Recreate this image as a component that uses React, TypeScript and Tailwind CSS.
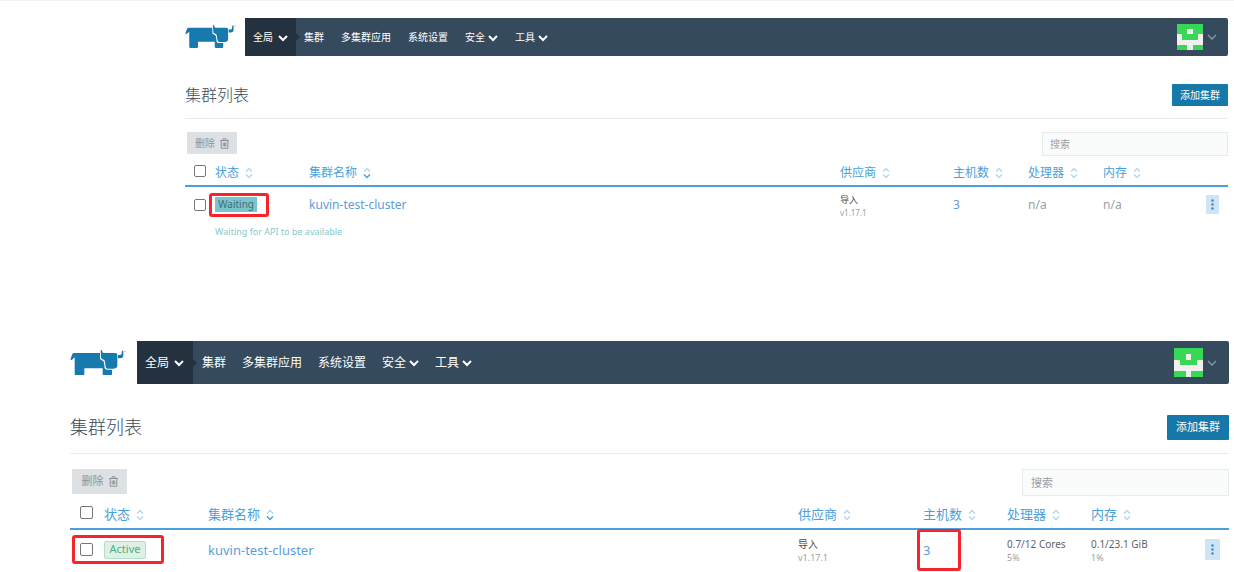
import { Fragment } from 'react';

type Size = 'compact' | 'regular';

type Cluster = {
  name: string;
  state: 'waiting' | 'active';
  message?: string;
  provider: string;
  version: string;
  hosts: number;
  cpu: string;
  cpuUsage?: string;
  memory: string;
  memoryUsage?: string;
};

const NAV = [
  { label: '集群' },
  { label: '多集群应用' },
  { label: '系统设置' },
  { label: '安全', menu: true },
  { label: '工具', menu: true },
];

const COLUMNS = ['状态', '集群名称', '供应商', '主机数', '处理器', '内存'];

const WAITING: Cluster = {
  name: 'kuvin-test-cluster',
  state: 'waiting',
  message: 'Waiting for API to be available',
  provider: '导入',
  version: 'v1.17.1',
  hosts: 3,
  cpu: 'n/a',
  memory: 'n/a',
};

const ACTIVE: Cluster = {
  name: 'kuvin-test-cluster',
  state: 'active',
  provider: '导入',
  version: 'v1.17.1',
  hosts: 3,
  cpu: '0.7/12 Cores',
  cpuUsage: '5%',
  memory: '0.1/23.1 GiB',
  memoryUsage: '1%',
};

// Every size-dependent class lives here, so the markup below stays the same for both.
const SIZES = {
  compact: {
    bar: 'h-[38px]',
    logo: 'w-[51px] mr-[9px]',
    nav: 'text-[10px]',
    scope: 'w-[51px] pl-2 gap-[5px]',
    links: 'ml-2 gap-[17px]',
    avatar: 'size-[26px]',
    user: 'pr-[11px] gap-1',
    head: 'mt-[28px] pb-3',
    title: 'text-[16px] leading-[22px]',
    add: 'h-[22px] w-[56px] text-[10px]',
    tools: 'mt-[13px]',
    remove: 'ml-[2px] h-[22px] w-[50px] text-[10px]',
    search: 'h-[24px] w-[186px] pl-[7px] text-[10px]',
    th: 'h-[30px] pt-1 text-[12px]',
    row: 'h-[36px]',
    badge: 'h-[15px] w-[42px] text-[10px]',
    check: 'size-3 ml-[9px]',
    text: 'block text-[12px] leading-4',
    small: 'pt-[2px] text-[9px] leading-[13px]',
    tiny: 'text-[8px] leading-[13px]',
    more: 'w-[13px] h-[19px] mr-[9px]',
    cols: ['w-[30px]', 'w-[94px]', 'w-auto', 'w-[113px]', 'w-[75px]', 'w-[75px]', 'w-[75px]', 'w-[50px]'],
  },
  regular: {
    bar: 'h-[43px]',
    logo: 'w-[56px] mr-[11px]',
    nav: 'text-[12px]',
    scope: 'w-[56px] pl-2 gap-[5px]',
    links: 'ml-[9px] gap-4',
    avatar: 'size-[29px]',
    user: 'pr-3 gap-1',
    head: 'mt-[31px] pb-[13px]',
    title: 'text-[18px] leading-[25px]',
    add: 'h-[25px] w-[62px] text-[11px]',
    tools: 'mt-[15px]',
    remove: 'ml-[2px] h-[25px] w-[55px] text-[11px]',
    search: 'h-[27px] w-[207px] pl-2 text-[11px]',
    th: 'h-[33px] pt-[5px] text-[13px]',
    row: 'h-[40px]',
    badge: 'h-[18px] w-[42px] text-[11px]',
    check: 'size-[13px] ml-[10px]',
    text: 'block text-[13px] leading-5',
    small: 'pt-[2px] text-[10px] leading-[14px]',
    tiny: 'text-[9px] leading-[14px]',
    more: 'w-[15px] h-[21px] mr-[9px]',
    cols: ['w-[34px]', 'w-[104px]', 'w-auto', 'w-[125px]', 'w-[84px]', 'w-[84px]', 'w-[84px]', 'w-[54px]'],
  },
};

export default function App() {
  return (
    <main className="border-t border-[#f3f3f3] bg-white pb-[2px] font-['Noto_Sans','Noto_Sans_CJK_SC',sans-serif] text-[#6c757d]">
      <div className="pt-[17px] pr-[6px] pl-[15%]">
        <ClusterPage size="compact" cluster={WAITING} />
      </div>
      <div className="mt-[101px] pr-[5px] pl-[70px]">
        <ClusterPage size="regular" cluster={ACTIVE} />
      </div>
    </main>
  );
}

function ClusterPage({ size, cluster }: { size: Size; cluster: Cluster }) {
  const s = SIZES[size];

  return (
    <section>
      {/* Top bar */}
      <header className="flex items-center">
        <a href="#home" aria-label="Rancher" className={`shrink-0 ${s.logo}`}>
          <Logo />
        </a>
        <nav className={`flex flex-1 items-center rounded-xs bg-[#364a5e] text-white ${s.bar} ${s.nav}`}>
          <button className={`relative flex h-full items-center bg-[#24313e] ${s.scope}`}>
            全局
            <Chevron />
            <span className="absolute top-1/2 left-full -mt-1 border-y-4 border-l-4 border-y-transparent border-l-[#24313e]" />
          </button>
          <div className={`flex items-center ${s.links}`}>
            {NAV.map(({ label, menu }) =>
              menu ? (
                <button key={label} className="flex items-center gap-[3px]">
                  {label}
                  <Chevron />
                </button>
              ) : (
                <a key={label} href={`#${label}`}>
                  {label}
                </a>
              ),
            )}
          </div>
          <button aria-label="User menu" className={`ml-auto flex items-center ${s.user}`}>
            <Avatar className={s.avatar} />
            <svg viewBox="0 0 10 6" className="w-[10px]" fill="none" stroke="#8d99a5" strokeWidth="1.3">
              <path d="M1 1l4 4 4-4" />
            </svg>
          </button>
        </nav>
      </header>

      {/* Title */}
      <div className={`flex items-center justify-between border-b border-[#e8eced] ${s.head}`}>
        <h1 className={`font-light text-[#3c4a59] ${s.title}`}>集群列表</h1>
        <button className={`rounded-[1px] bg-[#1578a8] text-white ${s.add}`}>添加集群</button>
      </div>

      <div className={`flex items-start justify-between ${s.tools}`}>
        <button
          disabled
          className={`flex items-center justify-center gap-[5px] rounded-[1px] bg-[#dde1e3] text-[#8c959b] ${s.remove}`}
        >
          删除
          <Trash />
        </button>
        <input
          type="search"
          aria-label="搜索"
          placeholder="搜索"
          className={`border border-[#e6ecec] bg-[#fafcfc] placeholder:text-[#9a9fa3] ${s.search}`}
        />
      </div>

      <ClusterTable size={size} cluster={cluster} />
    </section>
  );
}

function ClusterTable({ size, cluster }: { size: Size; cluster: Cluster }) {
  const s = SIZES[size];
  const waiting = cluster.state === 'waiting';

  return (
    <table className="w-full table-fixed text-left">
      <colgroup>
        {s.cols.map((c, i) => (
          <col key={i} className={c} />
        ))}
      </colgroup>
      <thead>
        <tr className="border-b-2 border-[#4b9fdb]">
          <th>
            <Check label="全选" className={s.check} />
          </th>
          {COLUMNS.map((c) => (
            <th key={c} className={`pb-0 font-normal text-[#4b9fdb] ${s.th}`}>
              <button className="flex items-center gap-[6px] whitespace-nowrap">
                {c}
                <Sort sorted={c === '集群名称'} />
              </button>
            </th>
          ))}
          <th />
        </tr>
      </thead>
      <tbody>
        <tr className={s.row}>
          <td>
            <div className="relative">
              <Check label={cluster.name} className={s.check} />
              {!waiting && <Highlight className="-top-2 left-[2px] h-[29px] w-[92px]" />}
            </div>
          </td>
          <td>
            <div className="relative">
              <span
                className={`flex items-center justify-center ${s.badge} ${
                  waiting
                    ? 'bg-[#78c6cd] text-[#456b70]'
                    : 'rounded-xs border border-[#b3dfc6] bg-[#dff1e6] text-[#4caf7a]'
                }`}
              >
                {waiting ? 'Waiting' : 'Active'}
              </span>
              {waiting && <Highlight className="-top-1 -left-[6px] h-[24px] w-[60px]" />}
            </div>
          </td>
          <td>
            <a href="#cluster" className={`text-[#5c9cdb] ${s.text}`}>
              {cluster.name}
            </a>
          </td>
          <td>
            <div className={`text-[#4c4c4c] ${s.small}`}>{cluster.provider}</div>
            <div className={`text-[#9a9fa3] ${s.tiny}`}>{cluster.version}</div>
          </td>
          <td>
            <div className="relative">
              <a href="#hosts" className={`text-[#5c9cdb] ${s.text}`}>
                {cluster.hosts}
              </a>
              {!waiting && <Highlight className="-top-[11px] -left-[6px] h-[42px] w-[44px]" />}
            </div>
          </td>
          <td>
            <Usage size={size} value={cluster.cpu} percent={cluster.cpuUsage} />
          </td>
          <td>
            <Usage size={size} value={cluster.memory} percent={cluster.memoryUsage} />
          </td>
          <td>
            <button
              aria-label="Actions"
              className={`ml-auto flex items-center justify-center rounded-[1px] bg-[#cfe5f6] text-[#3b8fd0] ${s.more}`}
            >
              <svg viewBox="0 0 3 11" className="h-[11px]" fill="currentColor">
                <circle cx="1.5" cy="1.5" r="1.3" />
                <circle cx="1.5" cy="5.5" r="1.3" />
                <circle cx="1.5" cy="9.5" r="1.3" />
              </svg>
            </button>
          </td>
        </tr>
        {cluster.message && (
          <tr>
            <td />
            <td colSpan={7} className="pt-[2px] text-[9px] leading-[16px] text-[#86c8cd]">
              {cluster.message}
            </td>
          </tr>
        )}
      </tbody>
    </table>
  );
}

/* ---------- helpers ---------- */

function Usage({ size, value, percent }: { size: Size; value: string; percent?: string }) {
  const s = SIZES[size];
  if (!percent) return <span className={`text-[#999fa4] ${s.text}`}>{value}</span>;
  return (
    <Fragment>
      <div className={`whitespace-nowrap text-[#5f6469] ${s.small}`}>{value}</div>
      <div className={`text-[#9a9fa3] ${s.tiny}`}>{percent}</div>
    </Fragment>
  );
}

function Check({ label, className }: { label: string; className: string }) {
  return (
    <input
      type="checkbox"
      aria-label={label}
      className={`block appearance-none rounded-xs border border-[#767676] bg-white ${className}`}
    />
  );
}

function Highlight({ className }: { className: string }) {
  return <span className={`pointer-events-none absolute rounded-[3px] border-3 border-[#f9232b] ${className}`} />;
}

function Chevron() {
  return (
    <svg viewBox="0 0 10 7" className="mt-[2px] w-[10px]" fill="none" stroke="currentColor" strokeWidth="2" aria-hidden="true">
      <path d="M1 1l4 4 4-4" />
    </svg>
  );
}

function Sort({ sorted }: { sorted: boolean }) {
  return (
    <svg viewBox="0 0 8 12" className="mt-px w-2" fill="none" strokeWidth="1.5" aria-hidden="true">
      <path d="M1 4.5l3-3 3 3" stroke="#b5d8f1" />
      <path d="M1 7.5l3 3 3-3" stroke={sorted ? '#4b9fdb' : '#b5d8f1'} />
    </svg>
  );
}

function Trash() {
  return (
    <svg viewBox="0 0 9 11" className="w-[9px]" fill="none" stroke="currentColor" aria-hidden="true">
      <path d="M0 2.5h9M3 2V.8h3V2M1.2 3v7.3h6.6V3M3.2 4.5v4M4.5 4.5v4M5.8 4.5v4" />
    </svg>
  );
}

function Avatar({ className }: { className: string }) {
  return (
    <svg viewBox="0 0 5 5" className={className} shapeRendering="crispEdges" aria-hidden="true">
      <path fill="#38d756" d="M0 0h5v5H0z" />
      <path fill="#f0f0f0" d="M2 1h1v1H2zM0 2h1v1h3V2h1v2H3v1H2V4H0z" />
    </svg>
  );
}

function Logo() {
  return (
    <svg viewBox="0 0 168 77" className="w-full" fill="#1779ad" aria-hidden="true">
      <path d="M1 29L6 14q1-5 6-5h78v16q0 5 5 6 6 1 7 7l2 16q1 5 8 5h14v13q0 4-4 4h-20q-4 0-4-4V55H43v17q0 4-4 4H18q-4 0-4-4V22L5 30z" />
      <path d="M92 0l4 1q0 8 5 8h36q5 0 5 5v32q0 10-11 10h-18q-5 0-6-6l-2-15q-1-6-7-7-5-1-5-6z" />
      <path d="M144 15h6q5 0 5-5l1-8h4v14q0 9-9 9h-7z" />
      <circle cx="165" cy="4" r="2" opacity=".5" />
    </svg>
  );
}
